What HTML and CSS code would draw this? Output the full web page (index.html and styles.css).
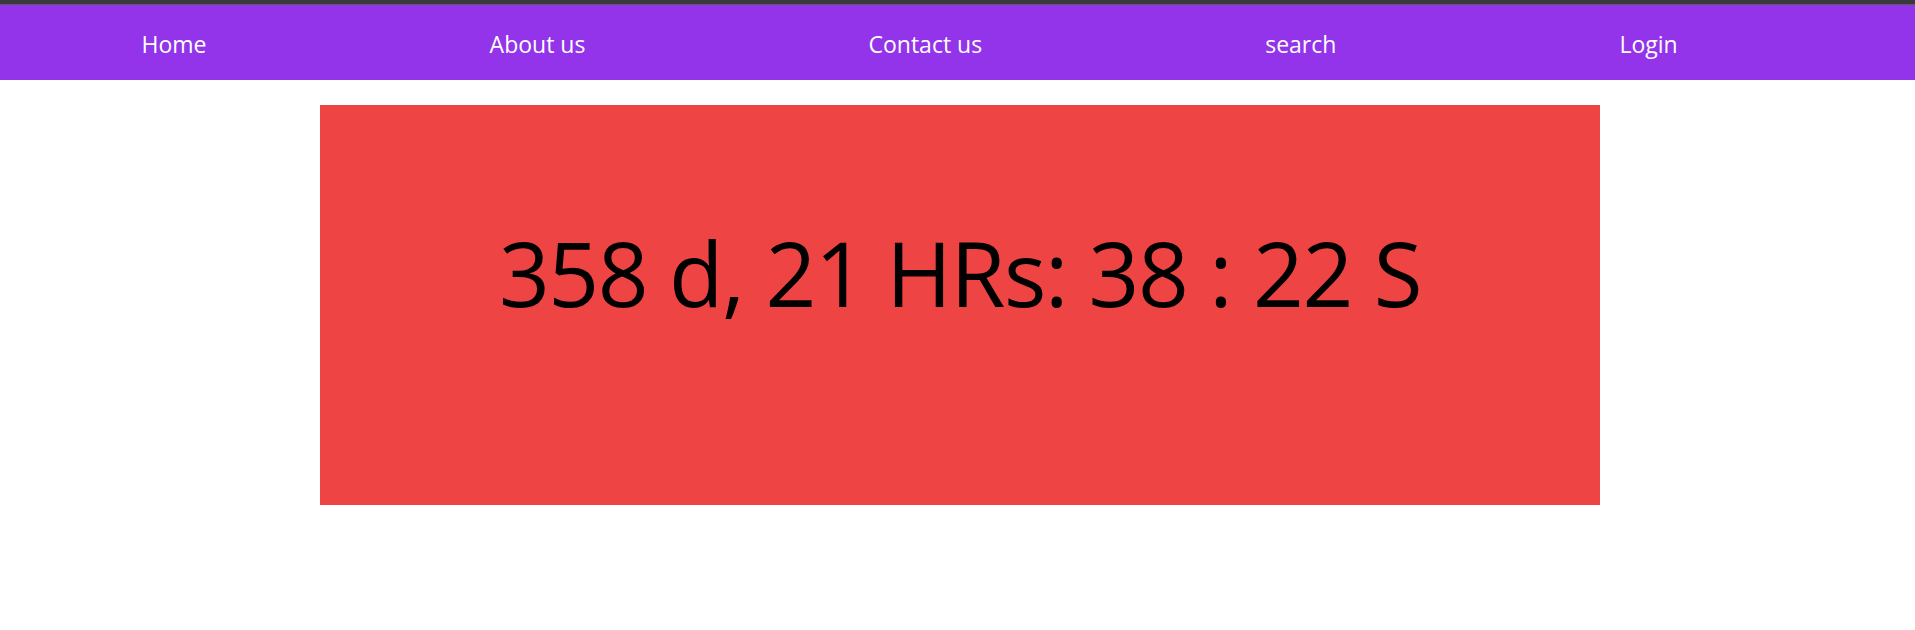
FILE: index.html
```html
<!DOCTYPE html>
<html lang="en">
<head>
<meta charset="utf-8">
<title>Countdown</title>
<link rel="stylesheet" href="styles.css">
</head>
<body>
<div class="topbar"></div>
<nav class="nav">
  <ul class="nav-list">
    <li class="nav-item">Home</li>
    <li class="nav-item">About us</li>
    <li class="nav-item">Contact us</li>
    <li class="nav-item">search</li>
    <li class="nav-item">Login</li>
  </ul>
</nav>
<main class="main">
  <section class="countdown">
    <p class="countdown-text">358 d, 21 HRs: 38 : 22 S</p>
  </section>
</main>
</body>
</html>
```
FILE: styles.css
```css
html, body {
  margin: 0;
  padding: 0;
  background: #ffffff;
  font-family: "Open Sans", "Noto Sans", sans-serif;
}
.topbar {
  height: 4px;
  background: #3a3a3d;
  border-bottom: 1px solid #5b5b5e;
}
.nav {
  background: #9333ea;
  height: 75px;
}
.nav-list {
  list-style: none;
  margin: 0;
  padding: 2px 0 0 0;
  box-sizing: border-box;
  width: 95%;
  height: 100%;
  display: flex;
  justify-content: space-around;
  align-items: center;
}
.nav-item {
  color: #ffffff;
  font-size: 23px;
}
.main {
  padding: 25px 0 0 5px;
}
.countdown {
  width: 1280px;
  height: 400px;
  margin: 0 auto;
  background: #ef4444;
  box-sizing: border-box;
  padding-top: 123px;
}
.countdown-text {
  margin: 0;
  text-align: center;
  font-size: 89px;
  letter-spacing: -1.4px;
  line-height: 1;
  color: #000000;
}
```
